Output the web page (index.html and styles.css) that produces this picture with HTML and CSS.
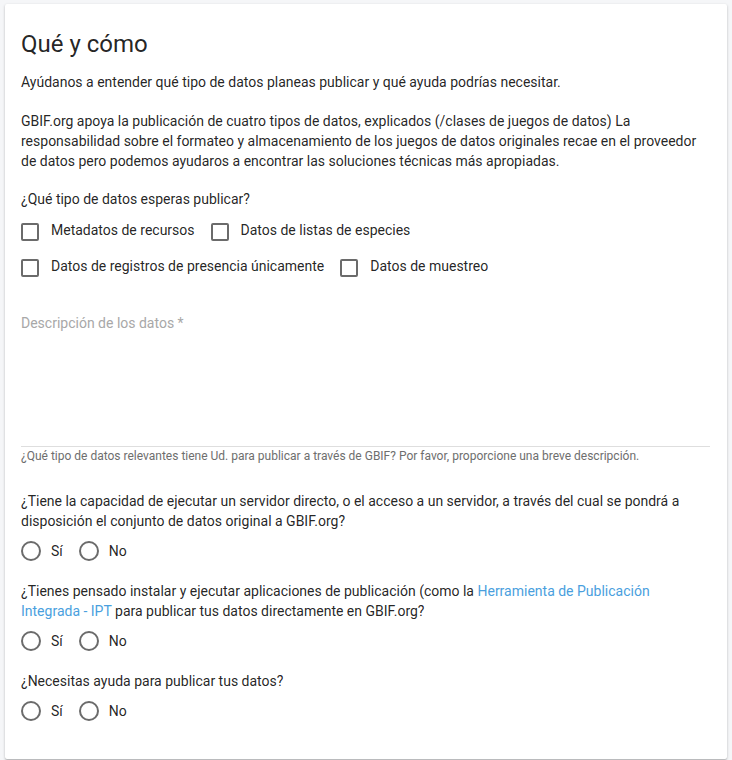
FILE: index.html
```html
<!DOCTYPE html>
<html lang="es">
<head>
<meta charset="utf-8">
<link rel="stylesheet" href="styles.css">
</head>
<body>
<div class="card">
  <h1 class="title">Qué y cómo</h1>
  <p class="intro">Ayúdanos a entender qué tipo de datos planeas publicar y qué ayuda podrías necesitar.</p>
  <p class="text">GBIF.org apoya la publicación de cuatro tipos de datos, explicados (/clases de juegos de datos) La responsabilidad sobre el formateo y almacenamiento de los juegos de datos originales recae en el proveedor de datos pero podemos ayudaros a encontrar las soluciones técnicas más apropiadas.</p>

  <p class="question q-types">¿Qué tipo de datos esperas publicar?</p>
  <div class="checks">
    <label class="check"><span class="box"></span><span>Metadatos de recursos</span></label>
    <label class="check"><span class="box"></span><span>Datos de listas de especies</span></label>
  </div>
  <div class="checks">
    <label class="check"><span class="box"></span><span>Datos de registros de presencia únicamente</span></label>
    <label class="check"><span class="box"></span><span>Datos de muestreo</span></label>
  </div>

  <div class="field">
    <div class="placeholder">Descripción de los datos *</div>
  </div>
  <div class="hint">¿Qué tipo de datos relevantes tiene Ud. para publicar a través de GBIF? Por favor, proporcione una breve descripción.</div>

  <p class="question q-first">¿Tiene la capacidad de ejecutar un servidor directo, o el acceso a un servidor, a través del cual se pondrá a disposición el conjunto de datos original a GBIF.org?</p>
  <div class="radios">
    <label class="radio"><span class="circle"></span><span>Sí</span></label>
    <label class="radio"><span class="circle"></span><span>No</span></label>
  </div>

  <p class="question">¿Tienes pensado instalar y ejecutar aplicaciones de publicación (como la <a class="link" href="#">Herramienta de Publicación Integrada - IPT</a> para publicar tus datos directamente en GBIF.org?</p>
  <div class="radios">
    <label class="radio"><span class="circle"></span><span>Sí</span></label>
    <label class="radio"><span class="circle"></span><span>No</span></label>
  </div>

  <p class="question">¿Necesitas ayuda para publicar tus datos?</p>
  <div class="radios">
    <label class="radio"><span class="circle"></span><span>Sí</span></label>
    <label class="radio"><span class="circle"></span><span>No</span></label>
  </div>
</div>
</body>
</html>
```

FILE: styles.css
```css
html, body {
  margin: 0;
  padding: 0;
  background: #f5f6f8;
}
body {
  padding: 4px 5px;
  font-family: Roboto, "Noto Sans", Arial, sans-serif;
  font-size: 14px;
  line-height: 20px;
  color: rgba(0, 0, 0, 0.87);
}
.card {
  width: 722px;
  box-sizing: border-box;
  background: #fff;
  border-radius: 2px;
  box-shadow: 0 1px 3px rgba(0, 0, 0, 0.2), 0 1px 1px rgba(0, 0, 0, 0.14);
  padding: 24px 16px 28px;
}
.title {
  margin: 0;
  font-size: 24px;
  font-weight: 400;
  line-height: 32px;
}
.intro {
  margin: 12px 0 19px;
}
.text {
  margin: 0;
}
.question {
  margin: 10px 0 0;
}
.q-types {
  margin-top: 18px;
  margin-bottom: 5px;
}
.q-first {
  margin-top: 27px;
}
.checks {
  display: flex;
  gap: 16px;
  height: 36px;
  box-sizing: border-box;
  padding-top: 6px;
  align-items: flex-start;
}
.check {
  display: flex;
  align-items: flex-start;
}
.box {
  width: 18px;
  height: 18px;
  box-sizing: border-box;
  border: 2px solid #6b6b6b;
  border-radius: 2px;
  margin-right: 12px;
  margin-top: 3px;
}
.field {
  margin-top: 27px;
  height: 133px;
  border-bottom: 1px solid #dedede;
  margin-right: 1px;
}
.placeholder {
  color: #a8a8a8;
}
.hint {
  font-size: 12px;
  line-height: 16px;
  color: #6e6e6e;
  margin-top: 1px;
}
.radios {
  display: flex;
  height: 40px;
  align-items: center;
  gap: 16px;
}
.radio {
  display: flex;
  align-items: center;
}
.circle {
  width: 20px;
  height: 20px;
  box-sizing: border-box;
  border: 2px solid #6b6b6b;
  border-radius: 50%;
  margin-right: 10px;
}
.link {
  color: #4a9fde;
  text-decoration: none;
}
```
